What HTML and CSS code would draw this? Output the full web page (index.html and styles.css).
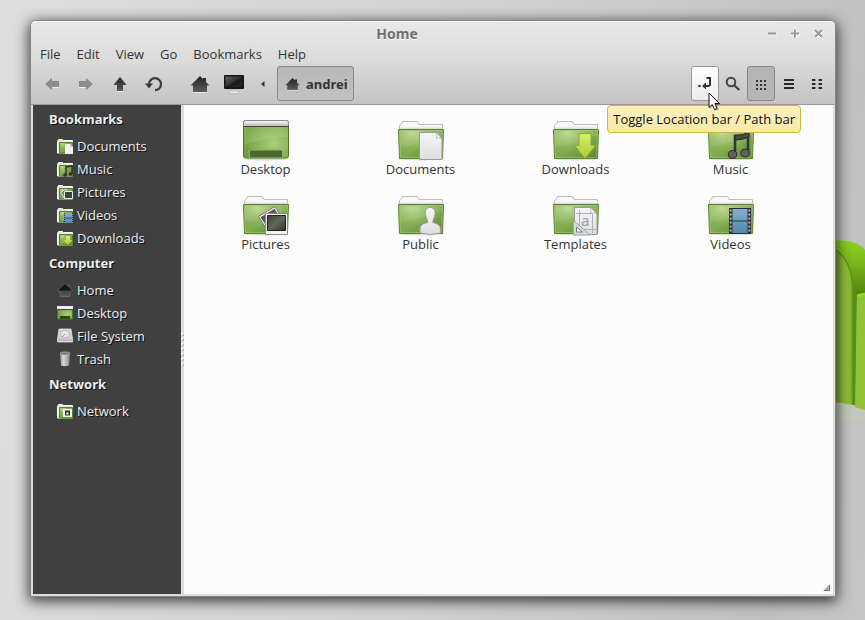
FILE: index.html
```html
<!DOCTYPE html>
<html lang="en">
<head>
<meta charset="utf-8">
<title>Home</title>
<meta name="viewport" content="width=device-width, initial-scale=1">
<link rel="stylesheet" href="styles.css">
</head>
<body>
<svg class="defs" aria-hidden="true">
  <defs>
    <linearGradient id="green" x1="0" y1="0" x2="1" y2="1">
      <stop offset="0" stop-color="#7fa84c"/><stop offset=".5" stop-color="#82aa50"/><stop offset="1" stop-color="#5c8a2c"/>
    </linearGradient>
    <radialGradient id="shine" cx=".3" cy=".1" r=".7">
      <stop offset="0" stop-color="#c0dc98" stop-opacity=".95"/><stop offset="1" stop-color="#a0c66c" stop-opacity="0"/>
    </radialGradient>
    <radialGradient id="glow" cx=".68" cy=".6" r=".65">
      <stop offset="0" stop-color="#acd07c"/><stop offset="1" stop-color="#71a03e"/>
    </radialGradient>
    <linearGradient id="paper" x1="0" y1="0" x2="0" y2="1">
      <stop offset="0" stop-color="#f6f6f6"/><stop offset="1" stop-color="#dedede"/>
    </linearGradient>
    <linearGradient id="bar" x1="0" y1="0" x2="0" y2="1">
      <stop offset="0" stop-color="#ffffff"/><stop offset="1" stop-color="#b4b4b4"/>
    </linearGradient>
    <linearGradient id="photo" x1="0" y1="0" x2="1" y2="1">
      <stop offset="0" stop-color="#3c3f34"/><stop offset=".5" stop-color="#62685a"/><stop offset="1" stop-color="#2f3129"/>
    </linearGradient>
    <linearGradient id="film" x1="0" y1="0" x2="0" y2="1">
      <stop offset="0" stop-color="#86aecb"/><stop offset="1" stop-color="#5288ac"/>
    </linearGradient>
    <linearGradient id="lime" x1="0" y1="0" x2="0" y2="1">
      <stop offset="0" stop-color="#dbee6c"/><stop offset="1" stop-color="#a8cc34"/>
    </linearGradient>
    <linearGradient id="dark" x1="0" y1="0" x2="0" y2="1">
      <stop offset="0" stop-color="#222222"/><stop offset="1" stop-color="#5c5c5c"/>
    </linearGradient>
    <linearGradient id="screen" x1="0" y1="0" x2="1" y2="1">
      <stop offset="0" stop-color="#666666"/><stop offset=".5" stop-color="#303030"/><stop offset=".52" stop-color="#1c1c1c"/><stop offset="1" stop-color="#262626"/>
    </linearGradient>
    <linearGradient id="metal" x1="0" y1="0" x2="1" y2="0">
      <stop offset="0" stop-color="#8a8a92"/><stop offset=".35" stop-color="#d8d8de"/><stop offset="1" stop-color="#85858d"/>
    </linearGradient>
    <linearGradient id="chairTop" x1="0" y1="0" x2="0" y2="1">
      <stop offset="0" stop-color="#8fd321"/><stop offset=".35" stop-color="#79b81c"/><stop offset="1" stop-color="#4b760f"/>
    </linearGradient>
    <linearGradient id="chairSide" x1="0" y1="0" x2="1" y2="0">
      <stop offset="0" stop-color="#7aa52f"/><stop offset=".5" stop-color="#92be3e"/><stop offset=".85" stop-color="#8aba32"/><stop offset="1" stop-color="#5c961a"/>
    </linearGradient>

    <symbol id="folder" viewBox="0 0 48 48">
      <ellipse cx="24" cy="44" rx="22" ry="1.5" fill="#000" opacity=".12"/>
      <path d="M2.500 16V10.500l2-1.500 1-2.500h15l1.500 3h23.500v7z" fill="#f8f8f8" stroke="#bcbcbc"/>
      <path d="M3 12.500h42.500V16H3z" fill="#dedede"/>
      <path d="M1.500 14.500h45L45.500 43.500h-43z" fill="url(#green)" stroke="#55842a"/>
      <path d="M2.500 15.500h43L44.500 42.500h-41z" fill="url(#shine)" stroke="#b4d089" stroke-opacity=".45"/>
      <path d="M2 15h44l-.2 6C33 23 18 31 3 32z" fill="#d0e6b0" opacity=".14"/>
    </symbol>
    <symbol id="folder-s" viewBox="0 0 16 16">
      <path d="M.5 15V3.500L1.500 1.500h4l1 1h9V15z" fill="#e4e9de" stroke="#fafafa"/>
      <path d="M2.500 4.500h13V15h-13z" fill="url(#green)" stroke="#568329"/>
      <path d="M3 5h8v9H3z" fill="url(#shine)"/>
    </symbol>
    <symbol id="house" viewBox="0 0 20 18">
      <path d="M10 1 13 4V3h3v4l3.500 3.500H17V17H3v-6.500H.5z" fill="url(#dark)"/>
      <path d="M3 17.500h14" stroke="#fff" stroke-opacity=".55"/>
    </symbol>
  </defs>
</svg>

<svg class="chair" viewBox="0 0 30 180" aria-hidden="true">
  <path d="M0 162 30 170V180H0z" fill="#c3cbb6" opacity=".6"/>
  <path d="M0 1C15-1 25 4 30 10V62L16 52 0 20z" fill="url(#chairTop)"/>
  <path d="M0 11C11 16 17 32 18 48V165L0 162z" fill="url(#chairSide)"/>
  <path d="M0 10C12 16 17 32 18 50V165" fill="none" stroke="#5c9a14" stroke-width="1.500"/>
  <path d="M18 48 22 56 21 165H18z" fill="#568f18"/>
  <path d="M22 56 30 54V170L20 167z" fill="#8fc338"/>
  <path d="M22 56 30 54" stroke="#92dc1c" stroke-width="3"/>
</svg>

<div class="window">
  <header class="chrome">
    <div class="titlebar">
      <h1 class="title">Home</h1>
      <div class="controls">
        <button type="button" aria-label="Minimize"><svg width="9" height="9"><path d="M1 6h8" stroke="#fff"/><path d="M0 4.500h8" stroke="#999" stroke-width="2"/></svg></button>
        <button type="button" aria-label="Maximize"><svg width="9" height="9"><path d="M0 5.500h9M5 1v8" stroke="#fff" stroke-width="2"/><path d="M0 4.500h8M4 .5v8" stroke="#999" stroke-width="2"/></svg></button>
        <button type="button" aria-label="Close"><svg width="9" height="9"><path d="M1 2l7 7M8 2 1 9" stroke="#fff" stroke-width="2"/><path d="M1 1l7 7M8 1 1 8" stroke="#999" stroke-width="2"/></svg></button>
      </div>
    </div>
    <nav class="menubar" aria-label="Menu">
      <button type="button">File</button>
      <button type="button">Edit</button>
      <button type="button">View</button>
      <button type="button">Go</button>
      <button type="button">Bookmarks</button>
      <button type="button">Help</button>
    </nav>
    <div class="toolbar">
      <button type="button" class="tool" aria-label="Back"><svg width="16" height="16"><path d="M1 8 8 2v3h7v6H8v3z" fill="#8c8c8c"/><path d="M8.500 11.500H15" stroke="#eee"/></svg></button>
      <button type="button" class="tool" aria-label="Forward"><svg width="16" height="16"><path d="M15 8 8 2v3H1v6h7v3z" fill="#8c8c8c"/><path d="M1 11.500h6.500" stroke="#eee"/></svg></button>
      <button type="button" class="tool" aria-label="Up"><svg width="16" height="16"><path d="M8 1 14.500 9H11v6H5V9H1.500z" fill="url(#dark)"/><path d="M5 15.500h6" stroke="#eee"/></svg></button>
      <button type="button" class="tool" aria-label="Reload"><svg width="18" height="16"><path d="M4 9V8a6 6 0 1 1 6 6.200" fill="none" stroke="#3c3c3c" stroke-width="2.200"/><path d="M0 7.500h8L4 12.500z" fill="#3c3c3c"/></svg></button>
      <span class="gap"></span>
      <button type="button" class="tool" aria-label="Home"><svg width="20" height="18"><use href="#house"/></svg></button>
      <button type="button" class="tool" aria-label="Computer"><svg width="22" height="20"><ellipse cx="11" cy="18" rx="5.500" ry="1.500" fill="#f0f0f0" stroke="#999" stroke-width=".6"/><path d="M8.500 15h5l.5 2.500H8z" fill="#c4c4c4"/><rect x="1" y="1" width="20" height="14" rx="1" fill="#161616"/><rect x="2.500" y="2.500" width="17" height="10.500" fill="url(#screen)"/></svg></button>
      <button type="button" class="tool more" aria-label="Show hidden path"><svg width="4" height="6"><path d="M0 3 3.500 0v6z" fill="#333"/></svg></button>
      <button type="button" class="path"><svg width="15" height="14"><use href="#house"/></svg><span>andrei</span></button>
      <span class="spacer"></span>
      <div class="tip-anchor">
        <button type="button" class="view hover" aria-label="Toggle Location bar / Path bar" aria-describedby="tip"><svg width="16" height="16"><circle cx="2.500" cy="10" r="1.300" fill="#333"/><path d="M9.500 2h3.500v7l-1.500 1H8" fill="none" stroke="#333" stroke-width="2"/><path d="M5 10l4-3.500v7z" fill="#333"/></svg></button>
        <div class="tooltip" id="tip" role="tooltip">Toggle Location bar / Path bar</div>
        <svg class="cursor" width="14" height="20" aria-hidden="true"><path d="M2 2v15l3.500-3.200L8 19l2.800-1.300L8.600 13H13z" fill="#000" opacity=".25"/><path d="M1 1v14.500l3.300-3 2.300 5.200 2.500-1.200L7 11.500h4.500z" fill="#fff" stroke="#111"/></svg>
      </div>
      <button type="button" class="view" aria-label="Search"><svg width="16" height="16"><circle cx="6" cy="6" r="4.300" fill="none" stroke="#444" stroke-width="2"/><path d="M9.300 9.300 14.300 14" stroke="#444" stroke-width="2.400"/></svg></button>
      <button type="button" class="view active" aria-label="Icon view" aria-pressed="true"><svg width="10" height="12"><path d="M0 3h10M0 7h10M0 11h10" stroke="#333" stroke-width="2" stroke-dasharray="2"/></svg></button>
      <button type="button" class="view" aria-label="List view"><svg width="10" height="12"><path d="M0 2h10M0 6h10M0 10h10" stroke="#2a2a2a" stroke-width="2"/></svg></button>
      <button type="button" class="view" aria-label="Compact view"><svg width="10" height="12"><path d="M0 2h3M7 2h3M0 6h3M7 6h3M0 10h3M7 10h3" stroke="#2a2a2a" stroke-width="2"/><path d="M3 2h1M6 2h1M3 6h1M6 6h1M3 10h1M6 10h1" stroke="#888" stroke-width="2"/></svg></button>
    </div>
  </header>

  <div class="content">
    <aside class="sidebar">
      <h2>Bookmarks</h2>
      <ul>
        <li><a href="#documents"><svg viewBox="0 0 16 16"><use href="#folder-s"/><path d="M8 6h5l3 3v7H8z" fill="#f0f0f0"/><path d="M13 6v3h3" fill="#c8c8c8"/></svg>Documents</a></li>
        <li><a href="#music"><svg viewBox="0 0 16 16"><use href="#folder-s"/><path d="M9 14V6l6-1v8" fill="none" stroke="#303030" stroke-width="1.500"/><circle cx="8" cy="14" r="1.800" fill="#303030"/><circle cx="13.500" cy="13" r="1.800" fill="#303030"/></svg>Music</a></li>
        <li><a href="#pictures"><svg viewBox="0 0 16 16"><use href="#folder-s"/><path d="M4 8l5-3 2 7-4 2z" fill="#777" stroke="#ddd"/><path d="M7.500 7.500h8v7h-8z" fill="#40433a" stroke="#eee"/></svg>Pictures</a></li>
        <li><a href="#videos"><svg viewBox="0 0 16 16"><use href="#folder-s"/><path d="M7 6h9v10H7z" fill="url(#film)"/><path d="M7.500 6v10M15.500 6v10" stroke="#2c3a44" stroke-dasharray="1"/><path d="M8 11h7" stroke="#34576e"/></svg>Videos</a></li>
        <li><a href="#downloads"><svg viewBox="0 0 16 16"><use href="#folder-s"/><path d="M9 6h4v4h2.500L11 15 6.500 10H9z" fill="url(#lime)"/></svg>Downloads</a></li>
      </ul>
      <h2>Computer</h2>
      <ul>
        <li><a href="#home"><svg viewBox="0 0 16 16"><path d="M8 2 11 4.500V3.500h2v3L15.500 9H13v5.500H3V9H.5z" fill="url(#dark)" stroke="#777" stroke-width=".6"/><path d="M8 2 15 8.500H1z" fill="#161616"/></svg>Home</a></li>
        <li><a href="#desktop"><svg viewBox="0 0 16 16"><path d="M.5 2h15v12H.5z" fill="url(#glow)" stroke="#4e7a24"/><path d="M0 1h16v3H0z" fill="#eee"/><path d="M0 4.500h16" stroke="#444"/><path d="M3 11h10v3H3z" fill="#2f4a18"/></svg>Desktop</a></li>
        <li><a href="#filesystem"><svg viewBox="0 0 16 16"><path d="M2 1h12l1.500 10v3H.5v-3z" fill="#d0d0d0" stroke="#eee" stroke-width=".7"/><ellipse cx="8" cy="6" rx="4.500" ry="3.700" fill="#e4e4e4" stroke="#bbb"/><path d="M5 9l3-3" stroke="#999"/><path d="M1 12h14" stroke="#a8a8a8"/></svg>File System</a></li>
        <li><a href="#trash"><svg viewBox="0 0 16 16"><path d="M3 2.500h10l-1 12q-4 1.500-8 0z" fill="url(#metal)"/><ellipse cx="8" cy="2.500" rx="5" ry="1.500" fill="#77777e" stroke="#bbb" stroke-width=".8"/></svg>Trash</a></li>
      </ul>
      <h2>Network</h2>
      <ul>
        <li><a href="#network"><svg viewBox="0 0 16 16"><use href="#folder-s"/><path d="M6 6h9v8H6z" fill="#f3f3f3"/><path d="M8 7.500h5v5H8z" fill="#333"/><path d="M9.500 9.500h2v2h-2z" fill="#fff"/></svg>Network</a></li>
      </ul>
    </aside>
    <div class="splitter" role="separator" aria-orientation="vertical"><svg width="3" height="34"><path d="M0 1h2M0 6h2M0 11h2M0 16h2M0 21h2M0 26h2M0 31h2" stroke="#fff" stroke-width="2"/><path d="M1 2h2M1 7h2M1 12h2M1 17h2M1 22h2M1 27h2M1 32h2" stroke="#999"/></svg></div>
    <main class="files">
      <a class="file" href="#desktop"><svg viewBox="0 0 48 48"><ellipse cx="24" cy="44" rx="22" ry="1.500" opacity=".15"/><rect x="1.500" y="5.500" width="45" height="37.500" rx="2" fill="url(#glow)" stroke="#4c7a24"/><path d="M2 12h44v10C30 22 16 25 2 30z" fill="#d0e6b0" opacity=".18"/><path d="M1.500 11.500V7.500q0-2 2-2h41q2 0 2 2v4z" fill="url(#bar)" stroke="#888"/><path d="M1 11.500h46" stroke="#444"/><path d="M7.500 43v-8h33v8z" fill="#4c6832" stroke="#8fb862"/></svg><span>Desktop</span></a>
      <a class="file" href="#documents"><svg viewBox="0 0 48 48"><use href="#folder"/><path d="M22.500 17.500h17l5.500 6v21H22.500z" fill="url(#paper)" stroke="#999"/><path d="M39.500 17.500q1 5-.5 5.500 4-.5 6 1z" fill="#fff" stroke="#aaa" stroke-width=".8"/></svg><span>Documents</span></a>
      <a class="file" href="#downloads"><svg viewBox="0 0 48 48"><use href="#folder"/><path d="M27 18.500h12v12h4.500L33 43.500 22.500 30.500H27z" fill="url(#lime)" stroke="#8dac2c"/></svg><span>Downloads</span></a>
      <a class="file" href="#music"><svg viewBox="0 0 48 48"><use href="#folder"/><path d="M28 39V21q8 1 13-3v20" fill="none" stroke="#333" stroke-width="2.500"/><path d="M28 20q8 1 14-3v5q-6 3-14 3z" fill="#494949" stroke="#2a2a2a"/><ellipse cx="25.500" cy="39.500" rx="4.200" ry="3.900" fill="#606060" stroke="#292929"/><ellipse cx="38" cy="38" rx="4.200" ry="3.900" fill="#606060" stroke="#292929"/></svg><span>Music</span></a>
      <a class="file" href="#pictures"><svg viewBox="0 0 48 48"><use href="#folder"/><path d="M16.500 26.500 33 16.500 43 33 25 40z" fill="#f2f2f2" stroke="#777"/><path d="M18.500 27.200 32.500 18.800 41 32 25 37z" fill="url(#photo)"/><path d="M23.500 23.500h22v21h-22z" fill="#f4f4f4" stroke="#888"/><path d="M25.500 25.500h18v15h-18z" fill="url(#photo)" stroke="#1e1e1a"/></svg><span>Pictures</span></a>
      <a class="file" href="#public"><svg viewBox="0 0 48 48"><use href="#folder"/><path d="M33 17.500c-4 0-5 3-4.500 7 .4 3 1.500 4 2 6v2c-4 1-7.500 2-7.500 6.500V43q10 3 20.500 0v-4c0-4-3.500-5.500-7.500-6.500v-2c.5-2 1.600-3 2-6 .5-4-1-7-5-7z" fill="url(#paper)" stroke="#999"/></svg><span>Public</span></a>
      <a class="file" href="#templates"><svg viewBox="0 0 48 48"><use href="#folder"/><path d="M22.500 17.500h16l6.500 6v21H22.500z" fill="url(#paper)" stroke="#999"/><path d="M38.500 17.500q1 5-.5 5.500 4-.5 7 1z" fill="#fff" stroke="#aaa" stroke-width=".8"/><path d="M27.500 20v24M40.500 24v19M24 23.500h16M28 39.500h16" stroke="#aaaebc"/><text class="glyph" x="29" y="36">a</text><path d="M21.500 30.500V45H38z" fill="#d6d8df" stroke="#a0a4b2"/><path d="M24.500 37v5h6z" fill="#fff" stroke="#777c8c"/></svg><span>Templates</span></a>
      <a class="file" href="#videos"><svg viewBox="0 0 48 48"><use href="#folder"/><path d="M22 18h22v26H22z" fill="#2c3033"/><path d="M25.500 19h15v11.500h-15zM25.500 31.500h15V43h-15z" fill="url(#film)"/><path d="M23.700 19.500v24M42.300 19.500v24" stroke="#c2c8cc" stroke-width="1.600" stroke-dasharray="2"/></svg><span>Videos</span></a>
    </main>
    <svg class="grip" width="7" height="7" aria-hidden="true"><path d="M7 0v7H0z" fill="#aaa"/><path d="M6.500 1v5.500H1" fill="none" stroke="#777"/></svg>
  </div>
</div>
</body>
</html>
```
FILE: styles.css
```css
* {
  box-sizing: border-box;
}

body {
  margin: 0;
  min-height: 100vh;
  padding: 20px 29px 23px 30px;
  display: flex;
  position: relative;
  overflow: hidden;
  background: linear-gradient(100deg, #dedede 0%, #d0d0d0 55%, #c0c0c0 90%, #c6c6c6 100%);
  font: 13px/18px "Open Sans", "Noto Sans", sans-serif;
  color: #333;
}

button {
  margin: 0;
  padding: 0;
  border: 0;
  background: none;
  font: inherit;
  color: inherit;
}

a {
  color: inherit;
  text-decoration: none;
}

svg {
  display: block;
  flex: none;
}

.defs {
  position: absolute;
  width: 0;
  height: 0;
}

.chair {
  position: absolute;
  right: 0;
  top: 240px;
  width: 30px;
  height: 180px;
}

.window {
  position: relative;
  flex: 1;
  min-width: 0;
  display: flex;
  flex-direction: column;
  border: 1px solid #868686;
  border-radius: 6px 6px 0 0;
  background: #dcdcdc;
  box-shadow: 0 3px 14px 1px rgba(0, 0, 0, .75);
}

.chrome {
  padding: 1px 2px 3px;
  border-bottom: 1px solid #999;
  border-radius: 5px 5px 0 0;
  background: linear-gradient(#e9e9e9, #dadada 50%, #c3c3c3);
  box-shadow: inset 0 1px #fff;
}

.titlebar {
  display: flex;
  align-items: center;
  height: 23px;
  padding-right: 3px;
}

.title {
  flex: 1;
  margin: 0;
  text-align: center;
  font-family: "Noto Sans", sans-serif;
  font-size: 14px;
  font-weight: 700;
  color: #707070;
  text-shadow: 0 1px #fff;
}

.controls {
  display: flex;
}

.controls button {
  width: 23px;
  height: 20px;
  display: grid;
  place-items: center;
}

.menubar {
  display: flex;
  gap: 16px;
  padding: 0 7px;
  height: 21px;
  align-items: flex-start;
}

.toolbar {
  display: flex;
  align-items: center;
  padding: 0 2px;
}

.tool {
  width: 34px;
  height: 35px;
  display: grid;
  place-items: center;
}

.tool.more {
  width: 24px;
}

.gap {
  width: 12px;
}

.spacer {
  flex: 1;
}

.path {
  height: 35px;
  margin-left: 2px;
  padding: 0 5px 0 7px;
  display: flex;
  align-items: center;
  gap: 6px;
  border: 1px solid #888;
  border-radius: 3px;
  background: linear-gradient(#b8b8b8, #c2c2c2);
  font-family: "Noto Sans", sans-serif;
  font-weight: 700;
}

.view {
  width: 28px;
  height: 35px;
  display: grid;
  place-items: center;
  border: 1px solid transparent;
  border-radius: 3px;
}

.view.hover {
  border-color: #999;
  background: linear-gradient(#fff, #ececec);
}

.view.active {
  border-color: #888;
  background: #b5b5b5;
}

.tip-anchor {
  position: relative;
}

.tooltip {
  position: absolute;
  z-index: 2;
  top: 39px;
  right: -82px;
  padding: 4px 5px;
  border: 1px solid #d2b544;
  border-radius: 4px;
  background: linear-gradient(#fbf1c0, #f8e9a6);
  color: #111;
  white-space: nowrap;
}

.cursor {
  position: absolute;
  z-index: 3;
  left: 17px;
  top: 26px;
}

.content {
  position: relative;
  flex: 1;
  display: flex;
  margin: 0 2px 2px;
}

.sidebar {
  width: 148px;
  flex: none;
  background: #404040;
  color: #eee;
  text-shadow: 1px 1px #111;
}

.sidebar h2 {
  margin: 0;
  padding-left: 16px;
  font-family: "Noto Sans", sans-serif;
  font-size: 13px;
  line-height: 29px;
}

.sidebar ul {
  margin: 0;
  padding: 0;
  list-style: none;
}

.sidebar a {
  display: flex;
  align-items: center;
  gap: 4px;
  height: 23px;
  padding-left: 24px;
}

.sidebar svg {
  width: 16px;
  height: 16px;
}

.splitter {
  width: 3px;
  display: flex;
  align-items: center;
  background: #dcdcdc;
}

.files {
  flex: 1;
  display: grid;
  grid-template-columns: repeat(auto-fill, 155px);
  grid-auto-rows: 75px;
  align-content: start;
  padding: 10px 0 0 4px;
  background: #fcfcfc;
}

.file {
  display: flex;
  flex-direction: column;
  align-items: center;
}

.file svg {
  width: 48px;
  height: 48px;
}

.file span {
  margin-top: -3px;
}

.glyph {
  font: 15px "Noto Sans", sans-serif;
  fill: #9499a8;
}

.grip {
  position: absolute;
  right: 3px;
  bottom: 3px;
}
```
